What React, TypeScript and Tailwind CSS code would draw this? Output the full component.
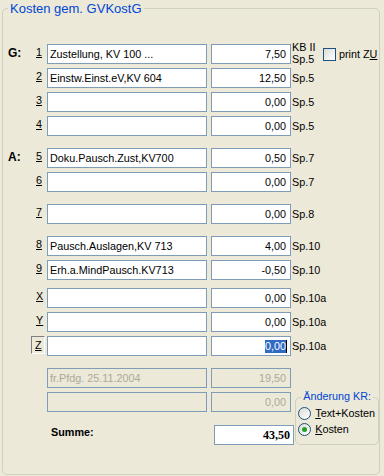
import React from 'react';

type Row = {
  n: string;
  g?: string;
  text: string;
  amt: string;
  suf: string;
  mt: string;
  focus?: boolean;
  first?: boolean;
};

const rows: Row[] = [
  { n: '1', g: 'G:', text: 'Zustellung, KV 100 ...', amt: '7,50', suf: 'Sp.5', mt: 'mt-0', first: true },
  { n: '2', text: 'Einstw.Einst.eV,KV 604', amt: '12,50', suf: 'Sp.5', mt: 'mt-[4px]' },
  { n: '3', text: '', amt: '0,00', suf: 'Sp.5', mt: 'mt-[4px]' },
  { n: '4', text: '', amt: '0,00', suf: 'Sp.5', mt: 'mt-[4px]' },
  { n: '5', g: 'A:', text: 'Doku.Pausch.Zust,KV700', amt: '0,50', suf: 'Sp.7', mt: 'mt-[12px]' },
  { n: '6', text: '', amt: '0,00', suf: 'Sp.7', mt: 'mt-[4px]' },
  { n: '7', text: '', amt: '0,00', suf: 'Sp.8', mt: 'mt-[12px]' },
  { n: '8', text: 'Pausch.Auslagen,KV 713', amt: '4,00', suf: 'Sp.10', mt: 'mt-[12px]' },
  { n: '9', text: 'Erh.a.MindPausch.KV713', amt: '-0,50', suf: 'Sp.10', mt: 'mt-[4px]' },
  { n: 'X', text: '', amt: '0,00', suf: 'Sp.10a', mt: 'mt-[8px]' },
  { n: 'Y', text: '', amt: '0,00', suf: 'Sp.10a', mt: 'mt-[4px]' },
  { n: 'Z', text: '', amt: '0,00', suf: 'Sp.10a', mt: 'mt-[4px]', focus: true },
];

function Box({ children, className }: { children?: React.ReactNode; className: string }) {
  return (
    <div className={'h-[20px] border border-[#7F9DB9] flex items-center whitespace-nowrap overflow-hidden leading-[13px] ' + className}>
      {children}
    </div>
  );
}

function Radio({ checked, label, u }: { checked?: boolean; label: string; u: string }) {
  return (
    <div className="flex items-center h-[13px] gap-[4px]">
      <div className="w-[13px] h-[13px] rounded-full border border-[#1C5180] bg-linear-to-br from-[#DCDCD7] to-white flex items-center justify-center">
        {checked && <div className="w-[5px] h-[5px] rounded-full bg-[#21A121]" />}
      </div>
      <span className="leading-[13px]">
        <span className="underline">{u}</span>
        {label}
      </span>
    </div>
  );
}

export default function App() {
  return (
    <div className="w-[384px] h-[476px] bg-[#ECE9D8] pt-[8px] pl-[2px] overflow-hidden font-['Liberation_Sans',Arial,sans-serif] text-[10.8px] text-black">
      <div className="relative w-[378px] h-[467px] border border-[#D0D0BF] rounded-[5px] pt-[35px]">
        <span className="absolute left-[5px] top-[-8px] px-[2px] bg-[#ECE9D8] text-[13px] leading-[15px] text-[#0046D5]">
          Kosten gem. GVKostG
        </span>

        {rows.map((r) => (
          <div key={r.n} className={'flex h-[20px] pl-[3px] ' + r.mt}>
            <div className="w-[41px] h-[20px] flex items-start">
              {r.focus ? (
                <>
                  <span className="w-[25px]" />
                  <div className="w-[14px] h-[18px] border-t border-l border-[#808080] border-b border-r border-b-white border-r-white pl-[3px] pt-[2px] leading-[13px]">
                    <span className="underline">Z</span>
                  </div>
                </>
              ) : (
                <>
                  <span className="w-[30px] pl-[2px] pt-[2px] font-bold text-[12px] leading-[14px]">{r.g ?? ''}</span>
                  <span className="pt-[2px] leading-[13px] underline">{r.n}</span>
                </>
              )}
            </div>
            <Box className="w-[160px] bg-white pl-[2px]">{r.text}</Box>
            <Box className={'ml-[4px] w-[80px] bg-white justify-end ' + (r.focus ? 'pr-[3px]' : 'pr-[4px]')}>
              {r.focus ? (
                <>
                  <span className="bg-[#316AC5] text-white leading-[13px]">{r.amt}</span>
                  <span className="w-[1px] h-[13px] bg-black" />
                </>
              ) : (
                r.amt
              )}
            </Box>
            {r.first ? (
              <>
                <div className="ml-[1px] w-[31px] self-start -mt-[3px] leading-[12px] whitespace-nowrap">
                  <div>KB II</div>
                  <div>Sp.5</div>
                </div>
                <div className="flex items-center gap-[3px]">
                  <div className="w-[13px] h-[13px] border border-[#1C5180] bg-linear-to-br from-[#DCDCD7] to-white" />
                  <span className="leading-[13px]">
                    print Z<span className="underline">U</span>
                  </span>
                </div>
              </>
            ) : (
              <div className="ml-[1px] flex items-center whitespace-nowrap leading-[13px]">{r.suf}</div>
            )}
          </div>
        ))}

        <div className="mt-[12px] flex pl-[3px]">
          <div className="w-[290px] flex flex-col">
            <div className="flex h-[20px]">
              <div className="w-[41px]" />
              <Box className="w-[160px] pl-[2px] text-[#ACA899]">fr.Pfdg. 25.11.2004</Box>
              <Box className="ml-[4px] w-[80px] justify-end pr-[4px] text-[#ACA899]">19,50</Box>
            </div>
            <div className="flex h-[20px] mt-[4px]">
              <div className="w-[41px]" />
              <Box className="w-[160px] pl-[2px]" />
              <Box className="ml-[4px] w-[80px] justify-end pr-[4px] text-[#ACA899]">0,00</Box>
            </div>
            <div className="flex h-[20px] mt-[13px]">
              <div className="w-[208px] pl-[45px] pt-[1px] font-bold leading-[13px]">Summe:</div>
              <Box className="w-[80px] bg-white justify-end pr-[3px] font-['Liberation_Serif',serif] font-bold text-[12px]">
                43,50
              </Box>
            </div>
          </div>
          <div className="relative mt-[29px] w-[84px] h-[48px] border border-[#D0D0BF] rounded-[5px] pl-[2px] pt-[9px] flex flex-col gap-[3px]">
            <span className="absolute left-[5px] top-[-8px] px-[2px] bg-[#ECE9D8] leading-[13px] text-[#0046D5]">
              Änderung KR:
            </span>
            <Radio label="ext+Kosten" u="T" />
            <Radio checked label="osten" u="K" />
          </div>
        </div>
      </div>
    </div>
  );
}
